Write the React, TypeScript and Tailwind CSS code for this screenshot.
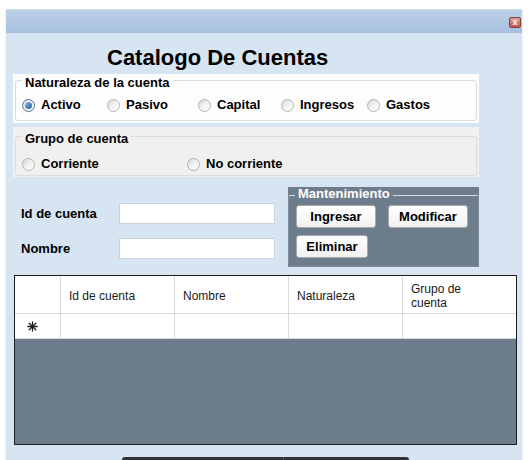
import React from 'react';

const font = "font-['Liberation_Sans',Arial,sans-serif]";

function Radio({ label, checked, width }: { label: string; checked?: boolean; width?: string }) {
  return (
    <div className={`flex items-center gap-[6px] shrink-0 ${width ?? ''}`}>
      <span
        className={`w-[13px] h-[13px] rounded-full border flex items-center justify-center shrink-0 ${
          checked
            ? 'border-[#55708c] bg-gradient-to-br from-[#d9e3ee] to-white'
            : 'border-[#b3b3b3] bg-gradient-to-br from-[#d8d8d8] via-[#f2f2f2] to-white'
        }`}
      >
        {checked && (
          <span className="w-[7px] h-[7px] rounded-full bg-gradient-to-br from-[#8fbbe6] to-[#1d5c9e]" />
        )}
      </span>
      <span className="text-[13px] leading-[16px] font-bold text-black whitespace-nowrap">{label}</span>
    </div>
  );
}

function WinButton({ label, width }: { label: string; width: string }) {
  return (
    <button
      className={`${width} h-[23px] rounded-[3px] border border-[#a9a9a9] bg-gradient-to-b from-white to-[#f1f1f1] text-[13px] font-bold text-black leading-none`}
    >
      {label}
    </button>
  );
}

function NewRowGlyph() {
  return (
    <svg width="11" height="11" viewBox="0 0 10 10">
      <g stroke="#1e1e1e" strokeWidth="1.2" strokeLinecap="round">
        <line x1="5" y1="0.8" x2="5" y2="9.2" />
        <line x1="0.8" y1="5" x2="9.2" y2="5" />
        <line x1="2" y1="2" x2="8" y2="8" />
        <line x1="8" y1="2" x2="2" y2="8" />
      </g>
    </svg>
  );
}

const columns = [
  { label: ['Id de cuenta'], w: 'w-[114px]' },
  { label: ['Nombre'], w: 'w-[114px]' },
  { label: ['Naturaleza'], w: 'w-[114px]' },
  { label: ['Grupo de', 'cuenta'], w: 'w-[113px]' },
];

export default function App() {
  return (
    <div className={`w-[528px] h-[460px] bg-white overflow-hidden ${font}`}>
      <div className="ml-[5px] mt-[9px] w-[518px] h-[460px] flex flex-col border-l border-r border-[#eef3f9]">
        {/* title bar */}
        <div className="h-[24px] shrink-0 border-t border-[#d3e0ee] bg-gradient-to-b from-[#bcd0e8] to-[#a6c0de] flex justify-end items-center pr-[1px]">
          <div className="mt-[1px] w-[12px] h-[11px] rounded-[2px] border border-[#8c3f3a] bg-gradient-to-b from-[#dca39d] to-[#c0554d] flex items-center justify-center text-white text-[9px] font-bold leading-none">
            x
          </div>
        </div>

        {/* client area */}
        <div className="flex-1 bg-[#d7e4f2] flex flex-col">
          <h1 className="mt-[12px] ml-[101px] text-[22px] leading-[26px] font-bold text-black">
            Catalogo De Cuentas
          </h1>

          {/* Naturaleza de la cuenta */}
          <div className="mt-[3px] ml-[7px] w-[466px] h-[49px] bg-[#fdfdfd] px-[2px]">
            <fieldset className="-mt-[3px] border border-[#d5dde5] rounded-[3px]">
              <legend className="ml-[6px] px-[3px] pt-[5px] text-[13px] leading-[14px] font-bold text-black">
                Naturaleza de la cuenta
              </legend>
              <div className="flex pl-[6px] pt-[7px] pb-[7px]">
                <Radio label="Activo" checked width="w-[85px]" />
                <Radio label="Pasivo" width="w-[91px]" />
                <Radio label="Capital" width="w-[83px]" />
                <Radio label="Ingresos" width="w-[86px]" />
                <Radio label="Gastos" />
              </div>
            </fieldset>
          </div>

          {/* Grupo de cuenta */}
          <div className="mt-[4px] ml-[7px] w-[466px] h-[50px] bg-[#f0f0f0] px-[2px]">
            <fieldset className="border border-[#dcdcdc] rounded-[3px]">
              <legend className="ml-[6px] px-[3px] pt-[5px] text-[13px] leading-[14px] font-bold text-black">
                Grupo de cuenta
              </legend>
              <div className="flex pl-[6px] pt-[10px] pb-[3px]">
                <Radio label="Corriente" width="w-[165px]" />
                <Radio label="No corriente" />
              </div>
            </fieldset>
          </div>

          {/* fields + mantenimiento */}
          <div className="mt-[10px] flex">
            <div className="ml-[15px] w-[254px] pt-[16px] flex flex-col gap-[14px]">
              <div className="flex items-center h-[21px]">
                <span className="w-[98px] text-[13px] font-bold text-black">Id de cuenta</span>
                <input className="w-[156px] h-[21px] bg-white border border-[#c9d3de] outline-none" />
              </div>
              <div className="flex items-center h-[21px]">
                <span className="w-[98px] text-[13px] font-bold text-black">Nombre</span>
                <input className="w-[156px] h-[21px] bg-white border border-[#c9d3de] outline-none" />
              </div>
            </div>

            <div className="ml-[13px] w-[191px] h-[80px] bg-[#6e7d8c]">
              <fieldset className="h-[80px] border border-[#7d8b99] border-t-[#d3dae2] rounded-[2px]">
                <legend className="ml-[6px] px-[3px] pb-[3px] text-[13px] leading-[14px] font-bold text-white">
                  Mantenimiento
                </legend>
                <div className="pl-[7px] pt-[1px] flex flex-col gap-[7px]">
                  <div className="flex gap-[12px]">
                    <WinButton label="Ingresar" width="w-[80px]" />
                    <WinButton label="Modificar" width="w-[80px]" />
                  </div>
                  <div className="flex">
                    <WinButton label="Eliminar" width="w-[72px]" />
                  </div>
                </div>
              </fieldset>
            </div>
          </div>

          {/* grid */}
          <div className="mt-[8px] ml-[8px] w-[503px] h-[170px] border border-[#1c1c1c] bg-[#6e7d8c] flex flex-col">
            <div className="flex h-[38px] bg-white border-b border-[#d8d8d8]">
              <div className="w-[46px] border-r border-[#d8d8d8]" />
              {columns.map((c, i) => (
                <div
                  key={c.label.join(' ')}
                  className={`${c.w} ${i < columns.length - 1 ? 'border-r border-[#d8d8d8]' : ''} pl-[8px] pr-[6px] pt-[2px] flex flex-col justify-center text-[12px] leading-[14px] text-[#1a1a1a]`}
                >
                  {c.label.map((line) => (
                    <span key={line}>{line}</span>
                  ))}
                </div>
              ))}
            </div>
            <div className="flex h-[25px] bg-white border-b border-[#d8d8d8]">
              <div className="w-[46px] border-r border-[#d8d8d8] flex items-center pl-[12px]">
                <NewRowGlyph />
              </div>
              {columns.map((c, i) => (
                <div
                  key={c.label.join(' ')}
                  className={`${c.w} ${i < columns.length - 1 ? 'border-r border-[#d8d8d8]' : ''}`}
                />
              ))}
            </div>
          </div>

          {/* dark bar peeking at the bottom */}
          <div className="mt-[12px] ml-[116px] w-[287px] h-[20px] flex rounded-t-[3px] overflow-hidden">
            <div className="w-[162px] bg-[#2d3339] border-r border-[#555b62]" />
            <div className="flex-1 bg-[#2d3339]" />
          </div>
        </div>
      </div>
    </div>
  );
}
